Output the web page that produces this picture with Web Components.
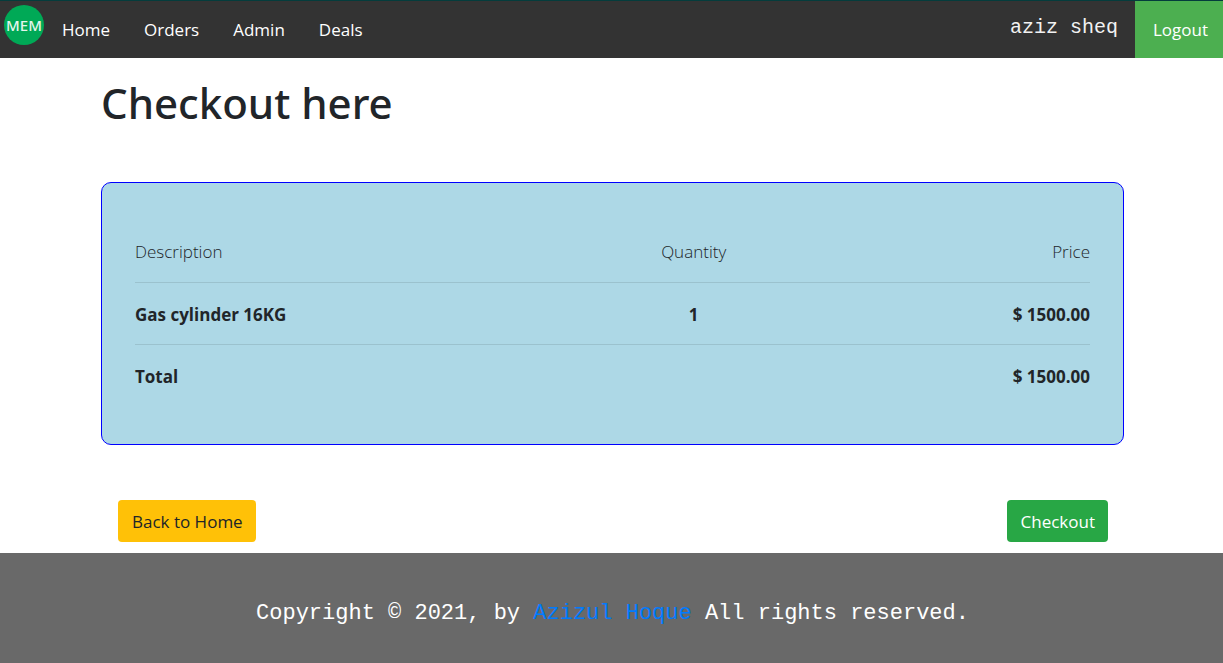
<!DOCTYPE html>
<html lang="en">
<head>
<meta charset="utf-8">
<meta name="viewport" content="width=device-width, initial-scale=1">
<title>Checkout</title>
<style>
  html, body { margin: 0; min-height: 100%; }
  body {
    background: #fff;
    color: #212529;
    font: 17px/26px "Open Sans", "Segoe UI", sans-serif;
  }
</style>
</head>
<body>
<shop-page>
  <shop-nav slot="header" user="aziz sheq">
    <nav-link href="#home">Home</nav-link>
    <nav-link href="#orders">Orders</nav-link>
    <nav-link href="#admin">Admin</nav-link>
    <nav-link href="#deals">Deals</nav-link>
    <nav-link slot="action" variant="action" href="#logout">Logout</nav-link>
  </shop-nav>
  <checkout-view>
    <order-summary item="Gas cylinder 16KG" quantity="1" price="1500.00"></order-summary>
    <shop-button slot="actions" variant="warning">Back to Home</shop-button>
    <shop-button slot="actions" variant="success">Checkout</shop-button>
  </checkout-view>
  <shop-footer slot="footer"></shop-footer>
</shop-page>

<script>
  class ShadowElement extends HTMLElement {
    constructor() {
      super();
      this.attachShadow({ mode: "open" });
    }
    connectedCallback() {
      this.shadowRoot.innerHTML = this.render();
    }
    attr(name) {
      return this.getAttribute(name) || "";
    }
  }

  customElements.define("shop-page", class extends ShadowElement {
    render() {
      return `
        <style>
          :host { display: flex; flex-direction: column; min-height: 100vh; }
          main { display: block; }
          .footer { flex: 1; display: flex; flex-direction: column; }
          ::slotted([slot="footer"]) { flex: 1; }
        </style>
        <slot name="header"></slot>
        <main><slot></slot></main>
        <div class="footer"><slot name="footer"></slot></div>`;
    }
  });

  customElements.define("shop-nav", class extends ShadowElement {
    render() {
      return `
        <style>
          :host { display: block; background: #333; border-top: 1px solid #043c3c; }
          nav { display: flex; align-items: stretch; min-height: 57px; }
          .brand { display: block; height: 40px; padding: 4px 0 0 4px; }
          svg { display: block; }
          .user {
            margin-left: auto;
            padding: 13px 17px 0 0;
            color: #f2f2f2;
            font: 20px/28px "Liberation Mono", "Courier New", monospace;
          }
          .action { display: flex; }
        </style>
        <nav>
          <a class="brand" href="#home" aria-label="MEM">
            <svg width="40" height="40" viewBox="0 0 40 40">
              <circle cx="20" cy="20" r="20" fill="#00a956"/>
              <text x="20" y="26" text-anchor="middle" font-family="Noto Sans, sans-serif" font-size="15" font-weight="500" fill="#e4f5ec">MEM</text>
            </svg>
          </a>
          <slot></slot>
          <span class="user">${this.attr("user")}</span>
          <div class="action"><slot name="action"></slot></div>
        </nav>`;
    }
  });

  customElements.define("nav-link", class extends ShadowElement {
    render() {
      return `
        <style>
          :host { display: flex; }
          a { padding: 16px 16px 15px 18px; color: #fff; text-decoration: none; white-space: nowrap; }
          :host([variant="action"]) a { background: #4caf50; }
          :host([variant="action"]) a { padding-right: 15px; }
        </style>
        <a href="${this.attr("href")}"><slot></slot></a>`;
    }
  });

  customElements.define("checkout-view", class extends ShadowElement {
    render() {
      return `
        <style>
          :host { display: block; padding: 18px 99px 11px 101px; }
          h1 { margin: 0 0 53px; font-family: "Noto Sans", "Open Sans", sans-serif; font-size: 42px; line-height: 53px; font-weight: 500; }
          .actions { display: flex; justify-content: space-between; padding: 55px 16px 0 17px; }
        </style>
        <h1>Checkout here</h1>
        <slot></slot>
        <div class="actions"><slot name="actions"></slot></div>`;
    }
  });

  customElements.define("order-summary", class extends ShadowElement {
    render() {
      const price = `$ ${this.attr("price")}`;
      return `
        <style>
          :host { display: block; padding: 38px 33px; background: lightblue; border: 1px solid blue; border-radius: 10px; }
          table { width: 100%; border-collapse: collapse; table-layout: fixed; }
          th, td { height: 59px; padding: 2px 0 0; text-align: left; font-weight: 700; }
          thead th { height: 61px; padding: 0; font-weight: 300; }
          tbody tr > *, tfoot tr > * { border-top: 1px solid #9bc2ce; }
          .name { width: 45%; }
          .qty { width: 27%; text-align: center; }
          .price { text-align: right; }
        </style>
        <table>
          <thead>
            <tr><th class="name" scope="col">Description</th><th class="qty" scope="col">Quantity</th><th class="price" scope="col">Price</th></tr>
          </thead>
          <tbody>
            <tr><td>${this.attr("item")}</td><td class="qty">${this.attr("quantity")}</td><td class="price">${price}</td></tr>
          </tbody>
          <tfoot>
            <tr><th scope="row">Total</th><td></td><td class="price">${price}</td></tr>
          </tfoot>
        </table>`;
    }
  });

  customElements.define("shop-button", class extends ShadowElement {
    render() {
      return `
        <style>
          :host { display: block; }
          button { display: block; padding: 9px 13px 7px 14px; border: 0; border-radius: 4px; font: inherit; cursor: pointer; }
          :host([variant="warning"]) button { background: #ffc107; color: #212529; }
          :host([variant="success"]) button { background: #28a745; color: #fff; }
        </style>
        <button type="button"><slot></slot></button>`;
    }
  });

  customElements.define("shop-footer", class extends ShadowElement {
    render() {
      return `
        <style>
          :host { display: block; background: #696969; color: #fff; }
          p { margin: 0; padding: 44px 16px 33px 18px; text-align: center; font: 22px/33px "Liberation Mono", "Courier New", monospace; }
          a { color: #007bff; text-decoration: none; }
        </style>
        <p>Copyright © 2021, by <a href="#author">Azizul Hoque</a> All rights reserved.</p>`;
    }
  });
</script>
</body>
</html>
